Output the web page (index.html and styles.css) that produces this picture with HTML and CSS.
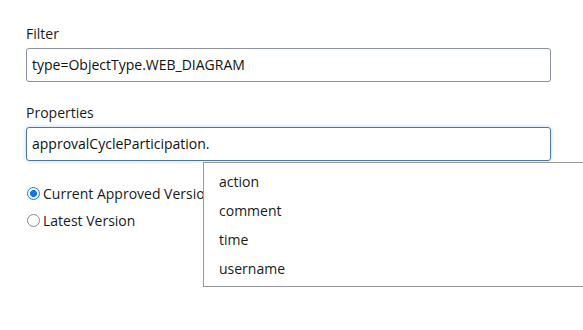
FILE: index.html
```html
<!DOCTYPE html>
<html>
<head>
<meta charset="utf-8">
<link rel="stylesheet" href="styles.css">
</head>
<body>
<div class="form">
  <div class="field">
    <label class="label">Filter</label>
    <div class="input">type=ObjectType.WEB_DIAGRAM</div>
  </div>
  <div class="field">
    <label class="label">Properties</label>
    <div class="input focused">approvalCycleParticipation.</div>
  </div>
  <div class="radios">
    <div class="radio-row"><span class="radio checked"></span><span>Current Approved Version</span></div>
    <div class="radio-row"><span class="radio"></span><span>Latest Version</span></div>
  </div>
  <ul class="dropdown">
    <li>action</li>
    <li>comment</li>
    <li>time</li>
    <li>username</li>
  </ul>
</div>
</body>
</html>
```
FILE: styles.css
```css
html, body {
  margin: 0;
  padding: 0;
  background: #fff;
  overflow: hidden;
}
body {
  font-family: "Open Sans", "Noto Sans", sans-serif;
  font-size: 14px;
  color: #222;
}
.form {
  position: relative;
  padding: 24px 32px 0 26px;
  width: 525px;
  height: 306px;
}
.field {
  display: flex;
  flex-direction: column;
  margin-bottom: 21px;
}
.field:nth-child(2) {
  margin-bottom: 23px;
}
.label {
  line-height: 19px;
  margin-bottom: 5px;
  color: #1a1a1a;
}
.input {
  box-sizing: border-box;
  height: 34px;
  border: 1px solid #8c91a2;
  border-radius: 3px;
  padding: 0 5px;
  line-height: 32px;
  color: #111;
}
.input.focused {
  border-color: #4f789e;
  box-shadow: 0 0 4px rgba(100, 160, 220, 0.45);
}
.radios {
  display: flex;
  flex-direction: column;
  gap: 8px;
}
.radio-row {
  display: flex;
  align-items: center;
  gap: 3px;
  line-height: 19px;
  white-space: nowrap;
  color: #1a1a1a;
}
.radio {
  box-sizing: border-box;
  width: 13px;
  height: 13px;
  margin-left: 1px;
  border: 1.5px solid #8a8a8a;
  border-radius: 50%;
  background: #fff;
  display: inline-block;
}
.radio.checked {
  border: 1.5px solid #1a73e8;
  background: radial-gradient(circle, #1a73e8 0 3.2px, #fff 3.8px);
}
.dropdown {
  position: absolute;
  left: 203px;
  top: 162px;
  width: 400px;
  margin: 0;
  padding: 4px 0 3px 0;
  list-style: none;
  background: #fff;
  border: 1px solid #999;
}
.dropdown li {
  height: 29px;
  line-height: 29px;
  padding-left: 15px;
  color: #1a1a1a;
}
```
